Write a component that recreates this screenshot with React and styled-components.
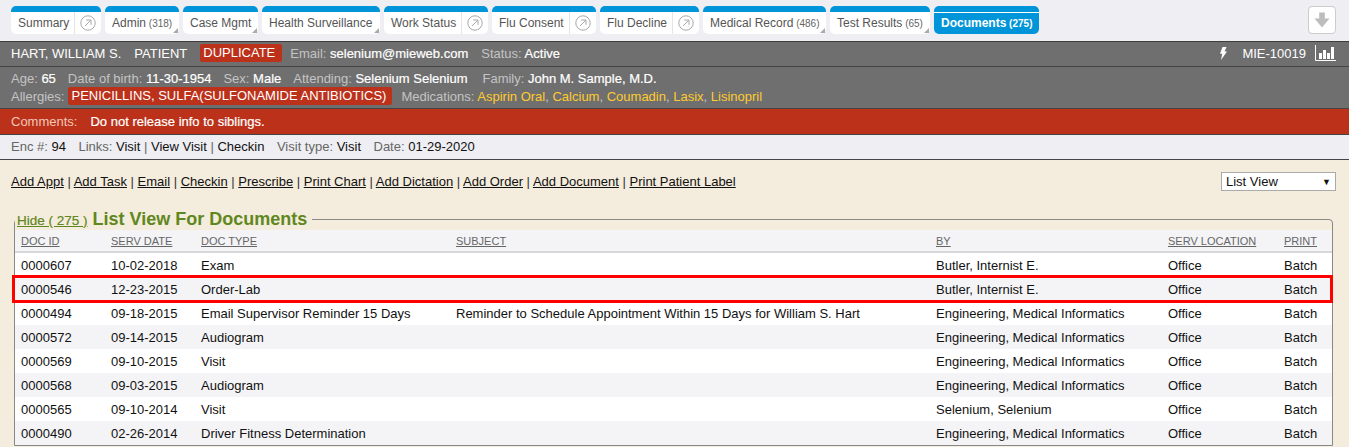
import React from "react";
import styled, { createGlobalStyle } from "styled-components";

const GlobalStyle = createGlobalStyle`
  html, body { margin: 0; padding: 0; height: 447px; overflow: hidden; background: #f4ecdd; }
  body { font-family: "Liberation Sans", Arial, sans-serif; font-size: 13px; color: #111; }
`;

const tabs = [
  { label: "Summary", width: 90, open: true },
  { label: "Admin", count: 318, width: 74, corner: true },
  { label: "Case Mgmt", width: 75, corner: true },
  { label: "Health Surveillance", width: 118, corner: true },
  { label: "Work Status", width: 104, open: true },
  { label: "Flu Consent", width: 104, open: true },
  { label: "Flu Decline", width: 99, open: true },
  { label: "Medical Record", count: 486, width: 123, corner: true },
  { label: "Test Results", count: 65, width: 100, corner: true },
  { label: "Documents", count: 275, width: 105, active: true },
];

const actions = ["Add Appt", "Add Task", "Email", "Checkin", "Prescribe", "Print Chart", "Add Dictation", "Add Order", "Add Document", "Print Patient Label"];

const docs = [
  ["0000607", "10-02-2018", "Exam", "", "Butler, Internist E."],
  ["0000546", "12-23-2015", "Order-Lab", "", "Butler, Internist E."],
  ["0000494", "09-18-2015", "Email Supervisor Reminder 15 Days", "Reminder to Schedule Appointment Within 15 Days for William S. Hart", "Engineering, Medical Informatics"],
  ["0000572", "09-14-2015", "Audiogram", "", "Engineering, Medical Informatics"],
  ["0000569", "09-10-2015", "Visit", "", "Engineering, Medical Informatics"],
  ["0000568", "09-03-2015", "Audiogram", "", "Engineering, Medical Informatics"],
  ["0000565", "09-10-2014", "Visit", "", "Selenium, Selenium"],
  ["0000490", "02-26-2014", "Driver Fitness Determination", "", "Engineering, Medical Informatics"],
];

const App = () => (
  <>
    <GlobalStyle />
    <TabBar>
      <Tabs>
        {tabs.map((t) => (
          <Tab key={t.label} $width={t.width} $active={t.active}>
            <TabLabel $active={t.active}>
              {t.label}
              {t.count && <Count $active={t.active}> ({t.count})</Count>}
            </TabLabel>
            {t.open && (
              <OpenBox>
                <svg width="16" height="16" viewBox="0 0 16 16" fill="none" stroke="#a8a8a8" strokeWidth="1">
                  <circle cx="8" cy="8" r="7.2" />
                  <path d="M5 11 L10.8 5.2 M6.2 5 H11 V9.8" />
                </svg>
              </OpenBox>
            )}
            {t.corner && <Corner />}
          </Tab>
        ))}
      </Tabs>
      <DownButton>
        <svg width="18" height="18" viewBox="0 0 18 18" fill="#bdbdbd">
          <path d="M6.2 1.5 H11.8 V7.5 H16.5 L9 16.5 L1.5 7.5 H6.2 Z" />
        </svg>
      </DownButton>
    </TabBar>

    <NameBar>
      <span>HART, WILLIAM S.</span>
      <span>PATIENT</span>
      <Duplicate>DUPLICATE</Duplicate>
      <span><Label>Email:</Label> <Value>selenium@mieweb.com</Value></span>
      <span><Label>Status:</Label> <Value>Active</Value></span>
      <NameRight>
        <svg width="8" height="13" viewBox="0 0 8 13" fill="#fff">
          <path d="M3.5 0 H7.5 L5.6 4.6 H8 L2 13 L3.2 6.8 H1 Z" />
        </svg>
        <MrnText>MIE-10019</MrnText>
        <svg width="21" height="16" viewBox="0 0 21 16">
          <path d="M0.5 0 V15.5 H21" fill="none" stroke="#fff" />
          <path d="M4 8 h3 v6 h-3 z M8 5 h3 v9 h-3 z M12 8 h3 v6 h-3 z M16 2 h3 v12 h-3 z" fill="#fff" />
        </svg>
      </NameRight>
    </NameBar>

    <InfoBar>
      <InfoRow>
        <span><Label>Age:</Label> <Value>65</Value></span>
        <span><Label>Date of birth:</Label> <Value>11-30-1954</Value></span>
        <span><Label>Sex:</Label> <Value>Male</Value></span>
        <span><Label>Attending:</Label> <Value>Selenium Selenium</Value></span>
        <FamilyItem><Label>Family:</Label> <Value>John M. Sample, M.D.</Value></FamilyItem>
      </InfoRow>
      <InfoRow>
        <Label>Allergies:</Label>
        <AllergyTag>PENICILLINS, SULFA(SULFONAMIDE ANTIBIOTICS)</AllergyTag>
        <span>
          <Label>Medications:</Label>{" "}
          <Med>Aspirin Oral</Med><Label>,</Label> <Med>Calcium</Med><Label>,</Label> <Med>Coumadin</Med><Label>,</Label> <Med>Lasix</Med><Label>,</Label> <Med>Lisinopril</Med>
        </span>
      </InfoRow>
    </InfoBar>

    <CommentBar>
      <CommentLabel>Comments:</CommentLabel>
      <Value>Do not release info to siblings.</Value>
    </CommentBar>

    <EncBar>
      <span><EncLabel>Enc #:</EncLabel> 94</span>
      <span><EncLabel>Links:</EncLabel> Visit <EncLabel>|</EncLabel> View Visit <EncLabel>|</EncLabel> Checkin</span>
      <span><EncLabel>Visit type:</EncLabel> Visit</span>
      <span><EncLabel>Date:</EncLabel> 01-29-2020</span>
    </EncBar>

    <Content>
      <ActionRow>
        <ActionLinks>
          {actions.map((a, i) => (
            <React.Fragment key={a}>
              {i > 0 && " | "}
              <ActionLink href="#">{a}</ActionLink>
            </React.Fragment>
          ))}
        </ActionLinks>
        <ViewSelect>
          List View
          <Caret>▼</Caret>
        </ViewSelect>
      </ActionRow>

      <Fieldset>
        <Legend>
          <HideLink href="#">Hide ( 275 )</HideLink> List View For Documents
        </Legend>
        <HeadRow>
          {["DOC ID", "SERV DATE", "DOC TYPE", "SUBJECT", "BY", "SERV LOCATION", "PRINT"].map((h) => (
            <HeadCell key={h} href="#">{h}</HeadCell>
          ))}
        </HeadRow>
        {docs.map((d, i) => (
          <DocRow key={d[0]} $odd={i % 2 === 1} $marked={d[0] === "0000546"}>
            {d.map((c, j) => <span key={j}>{c}</span>)}
            <span>Office</span>
            <span>Batch</span>
          </DocRow>
        ))}
      </Fieldset>
    </Content>
  </>
);

export default App;

const TabBar = styled.div`
  height: 41px;
  box-sizing: border-box;
  padding: 6px 11px 0;
  background: #eeeef3;
  display: flex;
  justify-content: space-between;
`;
const Tabs = styled.div`
  display: flex;
  gap: 4px;
  height: 28px;
`;
const Tab = styled.div`
  position: relative;
  width: ${(p) => p.$width}px;
  box-sizing: border-box;
  display: flex;
  border-top: 6px solid #0095d9;
  border-radius: 5px;
  background: ${(p) => (p.$active ? "#0095d9" : "#fff")};
  box-shadow: ${(p) => (p.$active ? "inset 0 1px 0 #fff" : "none")};
`;
const TabLabel = styled.div`
  flex: 1;
  padding-left: 7px;
  font-size: 12px;
  line-height: 23px;
  white-space: nowrap;
  color: ${(p) => (p.$active ? "#fff" : "#555")};
  font-weight: ${(p) => (p.$active ? "bold" : "normal")};
`;
const Count = styled.span`
  font-size: 10px;
  color: ${(p) => (p.$active ? "#fff" : "#666")};
`;
const OpenBox = styled.div`
  width: 27px;
  flex: none;
  display: flex;
  align-items: center;
  justify-content: center;
  border-left: 1px solid #e4e4e4;
  box-sizing: border-box;
`;
const Corner = styled.i`
  position: absolute;
  right: 1px;
  bottom: 1px;
  width: 0;
  height: 0;
  border-left: 5px solid transparent;
  border-bottom: 5px solid #aaa;
`;
const DownButton = styled.div`
  width: 28px;
  height: 28px;
  margin-right: 2px;
  box-sizing: border-box;
  background: #fff;
  border: 1px solid #ccc;
  border-radius: 4px;
  display: flex;
  align-items: center;
  justify-content: center;
`;
const NameBar = styled.div`
  height: 26px;
  box-sizing: border-box;
  padding: 0 11px 2px;
  background: #6f6f6f;
  border-top: 1px solid #3c3c3c;
  border-bottom: 1px solid #444;
  display: flex;
  align-items: center;
  gap: 13px;
  color: #fff;
`;
const Duplicate = styled.span`
  color: #fff;
  background: #bc311a;
  border-radius: 2px;
  padding: 1px 7px 1px 3px;
  line-height: 16px;
  margin-right: -5px;
`;
const Label = styled.span`
  color: #c4c4c4;
`;
const Value = styled.span`
  color: #fff;
  -webkit-text-stroke: 0.2px #fff;
`;
const NameRight = styled.div`
  margin-left: auto;
  display: flex;
  align-items: center;
  gap: 15px;
  margin-right: 2px;
  & > svg:last-child {
    margin-left: -6px;
  }
`;
const MrnText = styled.span`
  color: #fff;
`;
const InfoBar = styled.div`
  height: 42px;
  box-sizing: border-box;
  padding: 2px 11px 0;
  background: #6f6f6f;
  border-bottom: 1px solid #444;
`;
const InfoRow = styled.div`
  display: flex;
  align-items: center;
  gap: 12px;
  height: 18px;
  & + & {
    gap: 4px;
  }
`;
const FamilyItem = styled.span`
  margin-left: 3px;
`;
const AllergyTag = styled.span`
  color: #fff;
  background: #bc311a;
  border-radius: 2px;
  padding: 0 6px 0 3px;
  line-height: 18px;
  margin-right: 5px;
`;
const Med = styled.span`
  color: #ffcb2e;
`;
const CommentBar = styled.div`
  height: 26px;
  box-sizing: border-box;
  padding: 0 11px;
  background: #bc311a;
  border-bottom: 1px solid #444;
  display: flex;
  align-items: center;
  gap: 13px;
`;
const CommentLabel = styled.span`
  color: #f0c8b8;
`;
const EncBar = styled.div`
  height: 25px;
  box-sizing: border-box;
  padding: 0 11px 1px;
  background: #eeeef3;
  border-bottom: 1px solid #444;
  display: flex;
  align-items: center;
  gap: 12.5px;
  color: #111;
`;
const EncLabel = styled.span`
  color: #666;
`;
const Content = styled.div`
  padding: 0 13px 0 11px;
`;
const ActionRow = styled.div`
  height: 43px;
  display: flex;
  align-items: center;
  justify-content: space-between;
`;
const ActionLinks = styled.div`
  color: #333;
`;
const ActionLink = styled.a`
  color: #111;
  text-decoration: underline;
`;
const ViewSelect = styled.div`
  width: 115px;
  height: 19px;
  box-sizing: border-box;
  padding-left: 4px;
  background: #fff;
  border: 1px solid #aaa;
  display: flex;
  align-items: center;
  justify-content: space-between;
`;
const Caret = styled.span`
  font-size: 9px;
  margin-right: 4px;
`;
const Fieldset = styled.fieldset`
  margin: 6px 0 0 3px;
  padding: 0;
  width: 1319px;
  box-sizing: border-box;
  border: 1px solid #888;
  border-radius: 4px 4px 0 0;
`;
const Legend = styled.legend`
  padding: 0 5px 0 2px;
  height: 21px;
  font-size: 18px;
  font-weight: bold;
  color: #5f8720;
  line-height: 21px;
`;
const HideLink = styled.a`
  font-size: 13.5px;
  font-weight: normal;
  color: #5f8720;
  text-decoration: underline;
  -webkit-text-stroke: 0.2px #5f8720;
`;
const columns = "90px 90px 255px 480px 232px 116px 1fr";
const HeadRow = styled.div`
  display: grid;
  grid-template-columns: ${columns};
  height: 23px;
  box-sizing: border-box;
  padding-left: 6px;
  background: #f4f4f7;
  border-bottom: 2px solid #d8d8d8;
  align-items: center;
`;
const HeadCell = styled.a`
  font-size: 11px;
  color: #666;
  text-decoration: underline;
`;
const DocRow = styled.div`
  display: grid;
  grid-template-columns: ${columns};
  height: 24px;
  padding-left: 6px;
  align-items: center;
  background: ${(p) => (p.$odd ? "#f4f4f7" : "#fff")};
  position: relative;
  z-index: ${(p) => (p.$marked ? 1 : "auto")};
  &::after {
    content: "";
    display: ${(p) => (p.$marked ? "block" : "none")};
    position: absolute;
    inset: -2px -1px -2px -3px;
    border: 3px solid #f00;
  }
`;
